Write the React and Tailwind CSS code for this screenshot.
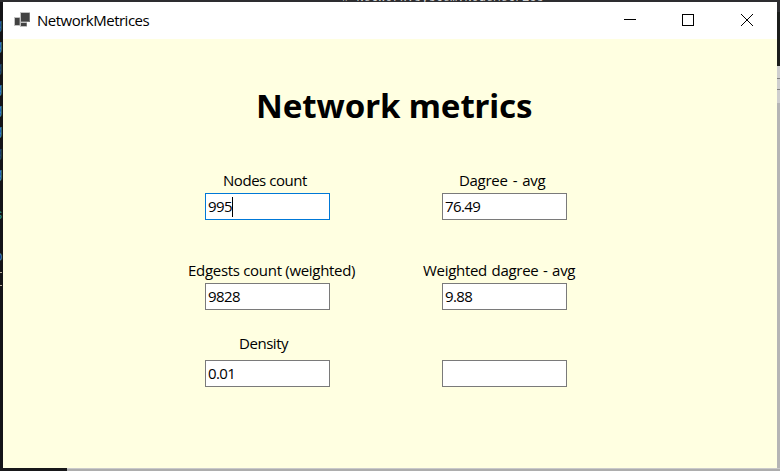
const LABEL = "block w-max whitespace-nowrap text-[15px] leading-[20px] font-['Open_Sans','Noto_Sans',sans-serif] text-black";

function Field({ label, labelClass, value, boxClass = "mt-[3px]", focused = false }) {
  return (
    <div className="flex w-[125px] flex-col">
      <span className={`${LABEL} ${labelClass}`}>{label}</span>
      <div className={`flex h-[27px] w-[125px] items-center border bg-white pl-[2px] ${focused ? "border-[#0078d7]" : "border-[#7a7a7a]"} ${boxClass}`}>
        <span className="pb-[2px] font-['Open_Sans','Noto_Sans',sans-serif] text-[15px] leading-[20px] tracking-[-0.6px] text-black">{value}</span>
        {focused && <span className="h-5 w-px bg-black" />}
      </div>
    </div>
  );
}

const MARKS = [
  { top: 18, text: "g", color: "text-[#2c69a5]" },
  { top: 39, text: "g", color: "text-[#3a86c8]" },
  { top: 61, text: "g", color: "text-[#254d75]" },
  { top: 82, text: "g", color: "text-[#3a86c8]" },
  { top: 103, text: "g", color: "text-[#3a86c8]" },
  { top: 124, text: "g", color: "text-[#3a86c8]" },
  { top: 146, text: "g", color: "text-[#254d75]" },
  { top: 167, text: "g", color: "text-[#3a86c8]" },
  { top: 208, text: "s", color: "text-[#2b8a8a]" },
  { top: 250, text: "o", color: "text-[#3a78b8]" },
];

export default function App() {
  return (
    <div className="flex h-[471px] w-[780px] flex-col overflow-hidden bg-[#18181b]">
      <div className="relative h-[2px] w-full overflow-hidden bg-[#2d2d30]">
        <span className="absolute top-[-9px] left-[342px] font-['Liberation_Mono',monospace] text-[12px] leading-[14px] whitespace-pre text-[#d0d0d0]"># Network.system.NodeMetrics</span>
      </div>
      <div className="flex h-[466px]">
        <div className="relative w-[3px] overflow-hidden bg-[#141417]">
          {MARKS.map((m) => (
            <span key={m.top} style={{ top: m.top - 3 }} className={`absolute right-0 font-['Liberation_Mono',monospace] text-[14px] leading-[16px] ${m.color}`}>{m.text}</span>
          ))}
          <div className="absolute top-[270px] left-0 h-px w-[2px] bg-[#b8ad9c]" />
          <div className="absolute top-[283px] left-0 h-px w-[2px] bg-[#b8ad9c]" />
        </div>
        <div className="flex w-[774px] flex-col bg-[#ffffe1]">
          <header className="flex h-[37px] shrink-0 items-center bg-white">
            <svg className="mb-[2px] ml-[11px] h-4 w-4 shrink-0" viewBox="0 0 16 16" shapeRendering="crispEdges">
              <path d="M7 1h9v9H7zM1 6h5v7H1zM7 11h6v3H7z" fill="#424242" />
              <path d="M6.5 0.5h9v9h-9zM0.5 5.5h5v8h-5zM6.5 10.5h6v4h-6z" fill="none" stroke="#9a9a9a" strokeOpacity="0.6" />
            </svg>
            <span className="mb-[2px] ml-[7px] w-[115px] whitespace-nowrap font-['Open_Sans','Noto_Sans',sans-serif] text-[15px] leading-[20px] tracking-[-0.5px] text-black">NetworkMetrices</span>
            <div className="ml-auto flex h-full">
              <svg className="h-[37px] w-[58px]" viewBox="0 0 58 37" shapeRendering="crispEdges"><path d="M21 17h12v1H21z" /></svg>
              <svg className="h-[37px] w-[58px]" viewBox="0 0 58 37" shapeRendering="crispEdges"><path d="M21.5 12.5h11v11h-11z" fill="none" stroke="#000" /></svg>
              <svg className="h-[37px] w-[58px]" viewBox="0 0 58 37"><path d="M22 12l12 12M34 12L22 24" stroke="#000" fill="none" /></svg>
            </div>
          </header>
          <main className="flex flex-col">
            <h1 className="mt-[47px] ml-[253px] w-max whitespace-nowrap font-['Noto_Sans','Open_Sans',sans-serif] text-[33px] leading-[40px] font-bold tracking-[-0.1px] text-black">Network metrics</h1>
            <div className="mt-[44px] ml-[202px] grid grid-cols-[125px_125px] gap-x-[112px]">
              <Field label="Nodes count" labelClass="ml-[18px] tracking-[-0.45px]" value="995" focused />
              <Field label="Dagree - avg" labelClass="ml-[17px] tracking-[-0.3px] [word-spacing:1.5px]" value="76.49" />
            </div>
            <div className="mt-[40px] ml-[202px] grid grid-cols-[125px_125px] gap-x-[112px]">
              <Field label="Edgests count (weighted)" labelClass="-ml-[17px] tracking-[-0.3px]" value="9828" />
              <Field label="Weighted dagree - avg" labelClass="-ml-[19px] tracking-[-0.3px] [word-spacing:1px]" value="9.88" />
            </div>
            <div className="mt-[23px] ml-[202px] grid grid-cols-[125px_125px] gap-x-[112px]">
              <Field label="Density" labelClass="ml-[34px] tracking-[-0.45px]" value="0.01" boxClass="mt-[7px]" />
              <Field label={"\u00a0"} labelClass="" value="" boxClass="mt-[7px]" />
            </div>
          </main>
        </div>
        <div className="flex w-[3px] flex-col bg-[#b5b5b5]">
          <div className="h-[10px] bg-[#2d2d30]" />
          <div className="h-[54px] bg-[#1b1d1b]" />
          <div className="h-[12px] bg-[#cfcfcf]" />
          <div className="h-px bg-[#808080]" />
          <div className="h-[10px] bg-[#cfcfcf]" />
          <div className="h-px bg-[#808080]" />
          <div className="h-[13px] bg-[#cfcfcf]" />
        </div>
      </div>
      <div className="flex h-[3px]">
        <div className="w-[67px] bg-[#18181a]" />
        <div className="flex-1 border-t border-[#cacaca] bg-[#adadad]" />
      </div>
    </div>
  );
}
